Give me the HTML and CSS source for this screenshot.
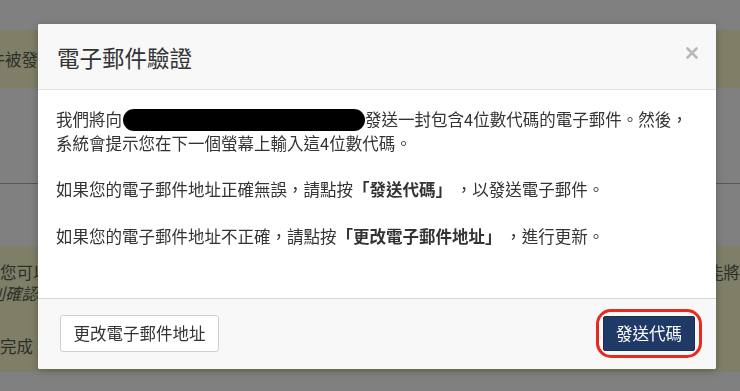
FILE: index.html
```html
<!DOCTYPE html>
<html lang="zh-Hant">
<head>
<meta charset="utf-8">
<title>電子郵件驗證</title>
<link rel="stylesheet" href="styles.css">
</head>
<body>
<div class="page">
  <div class="gap-top"></div>
  <div class="band band-one"><span class="cut cut-one">您的郵件被發</span></div>
  <div class="gap-mid"></div>
  <div class="rule"></div>
  <div class="gap-low"></div>
  <div class="band band-two">
    <div class="row row-a"><span>您可以</span><span class="right">可能將</span></div>
    <div class="row row-b"><span class="cut cut-two">請別確認</span></div>
    <div class="row row-c"><span>完成</span></div>
  </div>
</div>

<div class="modal">
  <div class="modal-header">
    <h1 class="modal-title">電子郵件驗證</h1>
    <svg class="close" width="12" height="12" viewBox="0 0 12 12" aria-label="關閉">
      <path d="M1.5 1.5 L10.5 10.5 M10.5 1.5 L1.5 10.5" stroke="#b9b9b9" stroke-width="2.6" stroke-linecap="round"/>
    </svg>
  </div>
  <div class="modal-body">
    <p>我們將向<span class="redact"></span>發送一封包含4位數代碼的電子郵件。然後，系統會提示您在下一個螢幕上輸入這4位數代碼。</p>
    <p>如果您的電子郵件地址正確無誤，請點按<b>「發送代碼」</b> ，以發送電子郵件。</p>
    <p>如果您的電子郵件地址不正確，請點按<b>「更改電子郵件地址」</b> ，進行更新。</p>
  </div>
  <div class="modal-footer">
    <button class="btn btn-default">更改電子郵件地址</button>
    <span class="highlight"><button class="btn btn-primary">發送代碼</button></span>
  </div>
</div>
</body>
</html>
```

FILE: styles.css
```css
* { box-sizing: border-box; }
html, body {
  margin: 0;
  padding: 0;
  width: 740px;
  height: 391px;
  overflow: hidden;
  background: #808080;
  font-family: "Noto Sans CJK TC", "Noto Sans", sans-serif;
  color: #333;
}
.page {
  display: flex;
  flex-direction: column;
  font-size: 16.5px;
  color: #2e2e2a;
}
.gap-top { height: 30px; }
.band { background: #7f7e66; }
.band-one {
  height: 58px;
  display: flex;
  align-items: center;
  overflow: hidden;
  white-space: nowrap;
}
.cut-one { margin-left: -61px; }
.gap-mid { height: 95px; }
.rule { height: 1px; background: #585858; }
.gap-low { height: 62px; }
.band-two {
  height: 126px;
  display: flex;
  flex-direction: column;
  overflow: hidden;
  white-space: nowrap;
}
.row {
  display: flex;
  justify-content: space-between;
  line-height: 21px;
}
.row-a { margin-top: 16px; }
.row-b { font-style: italic; }
.cut-two { margin-left: -28px; }
.row-c { margin-top: 32px; }

.modal {
  position: fixed;
  left: 38px;
  top: 24px;
  width: 678px;
  height: 345px;
  display: flex;
  flex-direction: column;
  background: #fff;
  border-radius: 2px;
  box-shadow: 0 2px 8px rgba(0,0,0,0.25);
  overflow: hidden;
}
.modal-header {
  height: 66px;
  flex: none;
  display: flex;
  align-items: center;
  justify-content: space-between;
  padding: 0 18px 0 19px;
  background: #f8f8f8;
  border-bottom: 1px solid #e2e2e2;
}
.modal-title {
  margin: 0;
  font-size: 22.5px;
  font-weight: 400;
  color: #333;
}
.close { margin-top: -8px; }
.modal-body {
  flex: none;
  height: 208px;
  padding: 18px 19px 0 18px;
  font-size: 16.5px;
  line-height: 23.5px;
  color: #333;
}
.modal-body p { margin: 0 0 23px; }
.modal-body b { font-weight: 700; }
.redact {
  display: inline-block;
  width: 242px;
  height: 22px;
  background: #000;
  border-radius: 11px;
  vertical-align: -5px;
  margin-left: 1px;
}
.modal-footer {
  flex: 1;
  display: flex;
  align-items: center;
  justify-content: space-between;
  padding: 0 21px 2px 22px;
  background: #f8f8f8;
  border-top: 1px solid #d6d6d6;
}
.btn {
  font-family: "Noto Sans CJK TC", "Noto Sans", sans-serif;
  font-size: 16.5px;
  height: 37px;
  border-radius: 3px;
  padding: 0 12px;
  cursor: pointer;
}
.btn-default {
  width: 159px;
  background: #fff;
  color: #333;
  border: 1px solid #cfcfcf;
}
.highlight {
  display: inline-flex;
  padding: 4px;
  margin-right: -7px;
  border: 3px solid #e62a1c;
  border-radius: 15px;
}
.btn-primary {
  width: 92px;
  height: 35px;
  background: #203a68;
  color: #fff;
  border: 1px solid #1a2f55;
  border-radius: 2px;
}
```
